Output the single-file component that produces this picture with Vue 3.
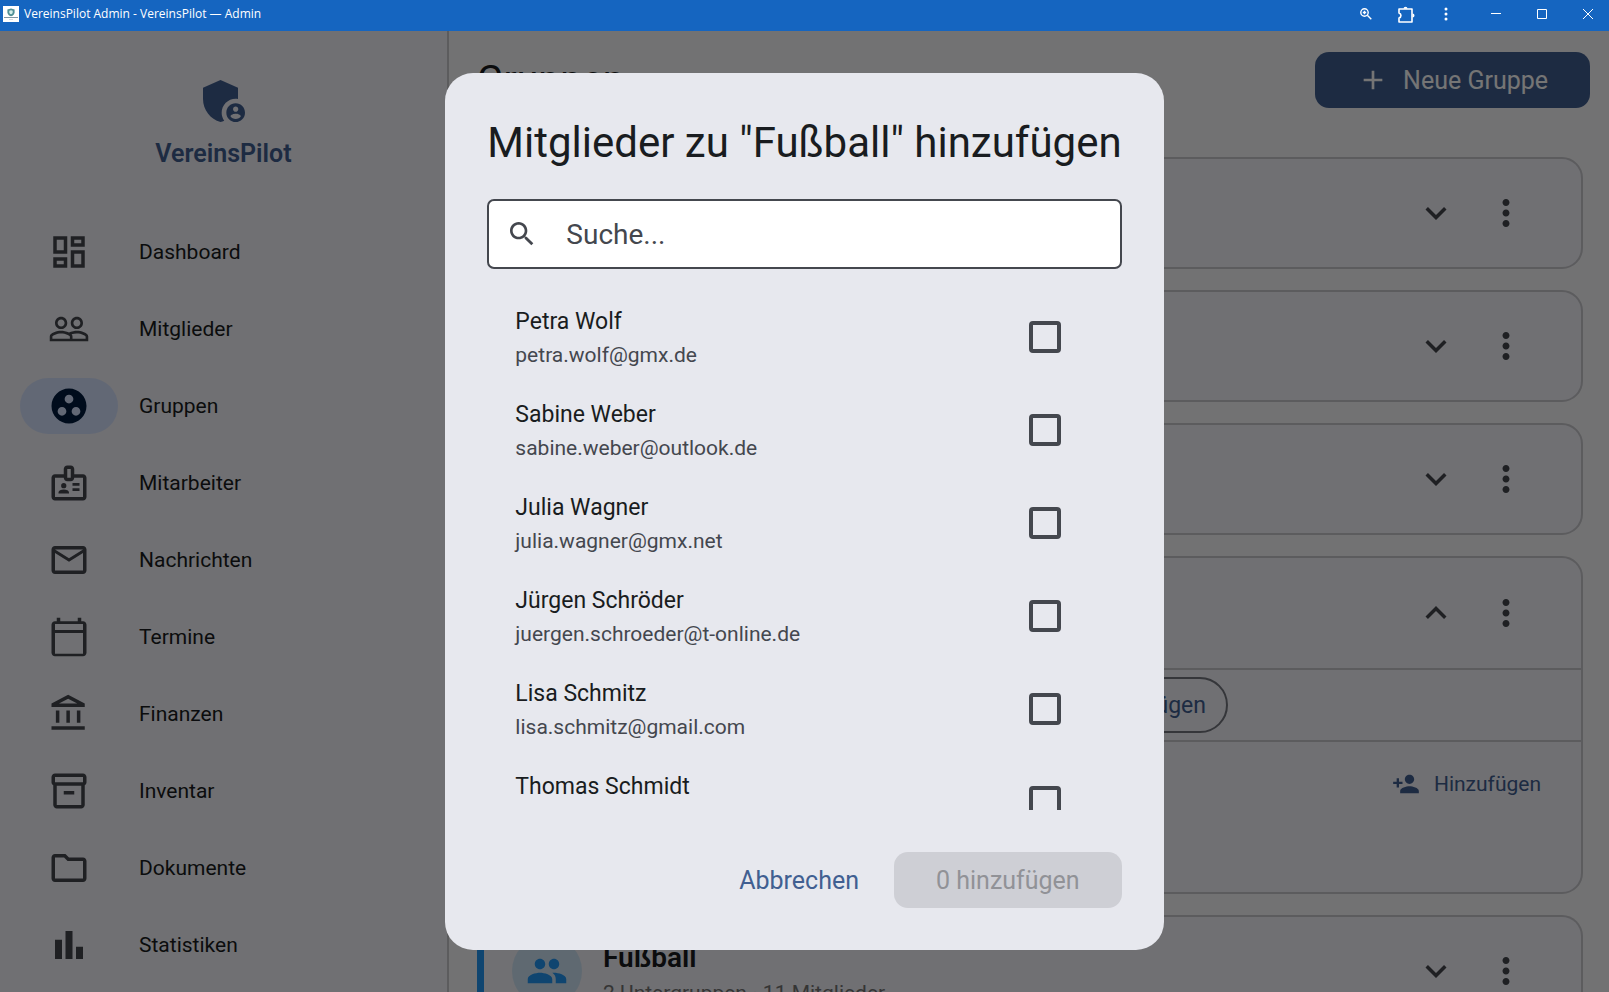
<template>
    <div class="window">
        <header class="titlebar">
            <svg class="favicon" viewBox="0 0 16 16" aria-hidden="true">
                <rect width="16" height="16" fill="#fff" />
                <path d="M8 2.500l3.600 1.100v2.600c0 1.900-1.400 3.300-3.600 4.100-2.200-.8-3.600-2.200-3.600-4.100V3.600z" fill="#4f8f96" />
                <path d="M8 4.200l1.700.6v1.400c0 .9-.6 1.600-1.700 2.100-1.100-.5-1.700-1.200-1.700-2.100V4.800z" fill="#d5eeea" />
                <path d="M1 11.500h14" stroke="#7f96a3" stroke-width="1" />
                <path d="M6 13.500h4" stroke="#d5dbe0" stroke-width="1" />
            </svg>
            <span class="titlebar-text">VereinsPilot Admin - VereinsPilot — Admin</span>
            <div class="titlebar-tools">
                <button class="tool" aria-label="Zoom">
                    <svg width="12" height="12" viewBox="0 0 12 12" fill="none" stroke="#fff">
                        <circle cx="4.500" cy="4.500" r="3.700" stroke-width="1.400" />
                        <path d="M7.300 7.300l4 4M4.500 2.800v3.400M2.800 4.500h3.400" stroke-width="1.400" />
                    </svg>
                </button>
                <button class="tool" aria-label="Erweiterungen">
                    <svg width="17" height="17" viewBox="0 0 17 17" fill="none" stroke="#fff" stroke-width="1.600" stroke-linejoin="round">
                        <path d="M1 3h13v13H1v-4c2.600-.6 2.600-4.300 0-5z" />
                        <path d="M5.500 2.800a2 2 0 0 1 4 0zM14.500 7.500a2 2 0 0 1 0 4z" fill="#fff" stroke="none" />
                    </svg>
                </button>
                <button class="tool" aria-label="Menü">
                    <svg width="4" height="14" viewBox="0 0 4 14" fill="#fff">
                        <circle cx="2" cy="2" r="1.500" /><circle cx="2" cy="7" r="1.500" /><circle cx="2" cy="12" r="1.500" />
                    </svg>
                </button>
            </div>
            <div class="titlebar-window">
                <button class="win" aria-label="Minimieren">
                    <svg width="10" height="10" viewBox="0 0 10 10" stroke="#fff"><path d="M0 4.500h10" /></svg>
                </button>
                <button class="win" aria-label="Maximieren">
                    <svg width="10" height="10" viewBox="0 0 10 10" fill="none" stroke="#fff"><path d="M.5.5h9v9h-9z" /></svg>
                </button>
                <button class="win" aria-label="Schließen">
                    <svg width="10" height="10" viewBox="0 0 10 10" stroke="#fff"><path d="M0 0l10 10M10 0L0 10" /></svg>
                </button>
            </div>
        </header>

        <div class="app">
            <aside class="sidebar">
                <div class="brand">
                    <svg class="brand-logo" viewBox="0 0 24 24" aria-hidden="true"><path :d="icons.admin" /></svg>
                    <span class="brand-name">VereinsPilot</span>
                </div>
                <nav class="nav">
                    <a v-for="n in navItems" :key="n.id" href="#"
                        class="nav-item"
                        :class="{ active: activeNav === n.id }"
                        @click.prevent="activeNav = n.id">
                        <span class="nav-pill">
                            <svg class="icon" viewBox="0 0 24 24" aria-hidden="true"><path :d="icons[n.id]" /></svg>
                        </span>
                        <span class="nav-label">{{ n.label }}</span>
                    </a>
                </nav>
            </aside>

            <main class="main">
                <div class="page-head">
                    <h1 class="page-title">Gruppen</h1>
                    <button class="btn-primary">
                        <svg class="icon-md" viewBox="0 0 24 24" aria-hidden="true"><path :d="icons.add" /></svg>
                        Neue Gruppe
                    </button>
                </div>
                <div class="cards">
                    <section v-for="g in groups" :key="g.id" class="card" :class="{ accent: g.name, open: g.open }">
                        <div class="card-head">
                            <template v-if="g.name">
                                <span class="avatar">
                                    <svg class="icon" viewBox="0 0 24 24" aria-hidden="true"><path :d="icons.people" /></svg>
                                </span>
                                <div class="card-text">
                                    <h2 class="card-title">{{ g.name }}</h2>
                                    <p class="card-sub">{{ g.info }}</p>
                                </div>
                            </template>
                            <div class="card-tools">
                                <button class="icon-btn" :aria-label="g.open ? 'Zuklappen' : 'Aufklappen'" @click="g.open = !g.open">
                                    <svg class="icon" viewBox="0 0 24 24"><path :d="g.open ? icons.less : icons.more" /></svg>
                                </button>
                                <button class="icon-btn" aria-label="Optionen">
                                    <svg class="icon" viewBox="0 0 24 24"><path :d="icons.dots" /></svg>
                                </button>
                            </div>
                        </div>
                        <template v-if="g.open">
                            <div class="card-row">
                                <button class="chip">Untergruppe hinzufügen</button>
                            </div>
                            <div class="card-members">
                                <button class="btn-link">
                                    <svg class="icon-sm" viewBox="0 0 24 24" aria-hidden="true"><path :d="icons.personAdd" /></svg>
                                    Hinzufügen
                                </button>
                            </div>
                        </template>
                    </section>
                </div>
            </main>

            <div class="scrim">
                <div class="dialog" role="dialog" aria-modal="true" aria-labelledby="dialog-title">
                    <h2 id="dialog-title" class="dialog-title">Mitglieder zu "Fußball" hinzufügen</h2>
                    <label class="search">
                        <svg class="icon-md" viewBox="0 0 24 24" aria-hidden="true"><path :d="icons.search" /></svg>
                        <input v-model="query" type="text" class="search-input" placeholder="Suche..." aria-label="Suche" />
                    </label>
                    <div class="list">
                        <label v-for="m in filtered" :key="m.name" class="member">
                            <span class="member-text">
                                <span class="member-name">{{ m.name }}</span>
                                <span class="member-mail">{{ m.mail }}</span>
                            </span>
                            <input v-model="selected" type="checkbox" class="check" :value="m.name" />
                        </label>
                    </div>
                    <div class="actions">
                        <button class="btn-text">Abbrechen</button>
                        <button class="btn-confirm" :disabled="!selected.length">{{ selected.length }} hinzufügen</button>
                    </div>
                </div>
            </div>
        </div>
    </div>
</template>

<script setup>
import { ref, computed } from 'vue';

const activeNav = ref('gruppen');
const query     = ref('');
const selected  = ref([]);

const navItems = [
    { id: 'dashboard',   label: 'Dashboard' },
    { id: 'mitglieder',  label: 'Mitglieder' },
    { id: 'gruppen',     label: 'Gruppen' },
    { id: 'mitarbeiter', label: 'Mitarbeiter' },
    { id: 'nachrichten', label: 'Nachrichten' },
    { id: 'termine',     label: 'Termine' },
    { id: 'finanzen',    label: 'Finanzen' },
    { id: 'inventar',    label: 'Inventar' },
    { id: 'dokumente',   label: 'Dokumente' },
    { id: 'statistiken', label: 'Statistiken' },
];

const groups = ref([
    { id: 1, open: false },
    { id: 2, open: false },
    { id: 3, open: false },
    { id: 4, open: true },
    { id: 5, open: false, name: 'Fußball', info: '2 Untergruppen · 11 Mitglieder' },
]);

const members = [
    { name: 'Petra Wolf',      mail: 'petra.wolf@gmx.de' },
    { name: 'Sabine Weber',    mail: 'sabine.weber@outlook.de' },
    { name: 'Julia Wagner',    mail: 'julia.wagner@gmx.net' },
    { name: 'Jürgen Schröder', mail: 'juergen.schroeder@t-online.de' },
    { name: 'Lisa Schmitz',    mail: 'lisa.schmitz@gmail.com' },
    { name: 'Thomas Schmidt',  mail: '' },
];

const filtered = computed(() => {
    const q = query.value.trim().toLowerCase();
    return members.filter(m => (m.name + ' ' + m.mail).toLowerCase().includes(q));
});

const icons = {
    admin: 'M17 11c.34 0 .67.04 1 .09V6.270L10.500 3 3 6.270v4.910c0 4.540 3.200 8.790 7.500 9.820.55-.13 1.080-.32 1.600-.55C11.410 19.470 11 18.280 11 17c0-3.310 2.690-6 6-6zM17 13c-2.210 0-4 1.790-4 4s1.790 4 4 4 4-1.790 4-4-1.790-4-4-4zm0 1.380c.62 0 1.120.51 1.120 1.120s-.51 1.120-1.120 1.120-1.120-.51-1.120-1.120.5-1.120 1.120-1.120zm0 5.370c-.93 0-1.740-.46-2.240-1.170.05-.72 1.510-1.080 2.240-1.080s2.190.36 2.240 1.080c-.5.71-1.310 1.170-2.240 1.170z',
    dashboard: 'M19 5v2h-4V5h4M9 5v6H5V5h4m10 8v6h-4v-6h4M9 17v2H5v-2h4M21 3h-8v6h8V3zM11 3H3v10h8V3zm10 8h-8v10h8V11zm-10 4H3v6h8v-6z',
    mitglieder: 'M16.5 13c-1.2 0-3.07.34-4.5 1-1.43-.67-3.3-1-4.5-1C5.33 13 1 14.08 1 16.25V19h22v-2.75c0-2.17-4.33-3.25-6.5-3.25zm-4 4.5h-10v-1.25c0-.54 2.56-1.75 5-1.75s5 1.21 5 1.75v1.25zm9 0H14v-1.25c0-.46-.2-.86-.52-1.22.88-.3 1.96-.53 3.02-.53 2.44 0 5 1.21 5 1.75v1.25zM7.5 12c1.93 0 3.5-1.57 3.5-3.5S9.43 5 7.5 5 4 6.57 4 8.5 5.57 12 7.5 12zm0-5.5c1.1 0 2 .9 2 2s-.9 2-2 2-2-.9-2-2 .9-2 2-2zm9 5.5c1.93 0 3.5-1.57 3.5-3.5S18.43 5 16.5 5 13 6.57 13 8.5s1.57 3.5 3.5 3.5zm0-5.5c1.1 0 2 .9 2 2s-.9 2-2 2-2-.9-2-2 .9-2 2-2z',
    gruppen: 'M12 2C6.48 2 2 6.48 2 12s4.48 10 10 10 10-4.48 10-10S17.52 2 12 2zM8 17.5c-1.38 0-2.5-1.12-2.5-2.5s1.12-2.5 2.5-2.5 2.5 1.12 2.5 2.5-1.12 2.5-2.5 2.5zM9.5 8c0-1.38 1.12-2.5 2.5-2.5s2.5 1.12 2.5 2.5-1.12 2.5-2.5 2.5S9.5 9.38 9.5 8zm6.5 9.5c-1.38 0-2.5-1.12-2.5-2.5s1.12-2.5 2.5-2.5 2.5 1.12 2.5 2.5-1.12 2.5-2.5 2.5z',
    mitarbeiter: 'M20 7h-5V4c0-1.1-.9-2-2-2h-2c-1.1 0-2 .9-2 2v3H4c-1.1 0-2 .9-2 2v11c0 1.1.9 2 2 2h16c1.1 0 2-.9 2-2V9c0-1.1-.9-2-2-2zm-9-3h2v5h-2V4zm9 16H4V9h5c0 1.1.9 2 2 2h2c1.1 0 2-.9 2-2h5v11zM9 12a1.5 1.5 0 1 0 0 3 1.5 1.5 0 1 0 0-3zM11.08 16.18C10.44 15.9 9.74 15.75 9 15.75s-1.44.15-2.08.43c-.56.24-.92.78-.92 1.39V18h6v-.43c0-.61-.36-1.15-.92-1.39zM14 15h4v1.5h-4zM14 12h4v1.5h-4z',
    nachrichten: 'M22 6c0-1.1-.9-2-2-2H4c-1.1 0-2 .9-2 2v12c0 1.1.9 2 2 2h16c1.1 0 2-.9 2-2V6zm-2 0l-8 5-8-5h16zm0 12H4V8l8 5 8-5v10z',
    termine: 'M20 3h-1V1h-2v2H7V1H5v2H4c-1.1 0-2 .9-2 2v16c0 1.1.9 2 2 2h16c1.1 0 2-.9 2-2V5c0-1.1-.9-2-2-2zm0 18.500H4V9.700h16v11.800zm0-13.500H4V4.500h16V8z',
    finanzen: 'M6.5 10h-2v7h2v-7zm6 0h-2v7h2v-7zm8.5 9H2v2h19v-2zm-2.5-9h-2v7h2v-7zm-7-6.74L16.71 6H6.29l5.21-2.74m0-2.26L2 6v2h19V6l-9.5-5z',
    inventar: 'M20 2H4c-1 0-2 .9-2 2v3.01c0 .72.43 1.34 1 1.69V20c0 1.1 1.1 2 2 2h14c.9 0 2-.9 2-2V8.7c.57-.35 1-.97 1-1.69V4c0-1.1-1-2-2-2zm-1 18H5V9h14v11zm1-13H4V4h16v3zM9 12h6v2H9z',
    dokumente: 'M9.17 6l2 2H20v10H4V6h5.17M10 4H4c-1.1 0-1.99.9-1.99 2L2 18c0 1.1.9 2 2 2h16c1.1 0 2-.9 2-2V8c0-1.1-.9-2-2-2h-8l-2-2z',
    statistiken: 'M4 9h4v11H4zM16 13h4v7h-4zM10 4h4v16h-4z',
    add: 'M19 13h-6v6h-2v-6H5v-2h6V5h2v6h6v2z',
    more: 'M16.59 8.59L12 13.17 7.41 8.59 6 10l6 6 6-6z',
    less: 'M12 8l-6 6 1.41 1.41L12 10.83l4.59 4.58L18 14z',
    dots: 'M12 8c1.1 0 2-.9 2-2s-.9-2-2-2-2 .9-2 2 .9 2 2 2zm0 2c-1.1 0-2 .9-2 2s.9 2 2 2 2-.9 2-2-.9-2-2-2zm0 6c-1.1 0-2 .9-2 2s.9 2 2 2 2-.9 2-2-.9-2-2-2z',
    search: 'M15.5 14h-.79l-.28-.27C15.41 12.59 16 11.11 16 9.5 16 5.91 13.09 3 9.5 3S3 5.91 3 9.5 5.91 16 9.5 16c1.61 0 3.09-.59 4.23-1.57l.27.28v.79l5 4.99L20.49 19l-4.99-5zm-6 0C7.01 14 5 11.99 5 9.5S7.01 5 9.5 5 14 7.01 14 9.5 11.99 14 9.5 14z',
    personAdd: 'M15 12c2.21 0 4-1.79 4-4s-1.79-4-4-4-4 1.79-4 4 1.79 4 4 4zm-9-2V7H4v3H1v2h3v3h2v-3h3v-2H6zm9 4c-2.67 0-8 1.34-8 4v2h16v-2c0-2.66-5.33-4-8-4z',
    people: 'M16 11c1.66 0 2.99-1.34 2.99-3S17.66 5 16 5c-1.66 0-3 1.34-3 3s1.34 3 3 3zm-8 0c1.66 0 2.99-1.34 2.99-3S9.66 5 8 5C6.34 5 5 6.34 5 8s1.34 3 3 3zm0 2c-2.33 0-7 1.17-7 3.5V19h14v-2.5c0-2.33-4.67-3.5-7-3.5zm8 0c-.29 0-.62.02-.97.05 1.16.84 1.97 1.97 1.97 3.45V19h6v-2.5c0-2.33-4.67-3.5-7-3.5z',
};
</script>

<style>
body {
    margin: 0;
    overflow: hidden;
}
</style>

<style scoped>
.window {
    display: flex;
    flex-direction: column;
    height: 100vh;
    overflow: hidden;
    font-family: Roboto, sans-serif;
    color: #191c20;
}
.window *, .window *::before { box-sizing: border-box; }
button {
    font-family: inherit;
    border: none;
    background: none;
    padding: 0;
    cursor: pointer;
    white-space: nowrap;
}
svg { display: block; flex: none; }
h1, h2, p { margin: 0; }

/* title bar */
.titlebar {
    display: flex;
    align-items: center;
    flex: none;
    height: 31px;
    padding: 0 0 3px 3px;
    background: #1565c0;
    color: #fff;
}
.favicon { width: 16px; height: 16px; }
.titlebar-text {
    flex: 1;
    margin-left: 5px;
    font-family: "Open Sans", sans-serif;
    font-size: 12px;
    line-height: 16px;
}
.titlebar-tools, .titlebar-window { display: flex; }
.titlebar-tools { margin-right: 7px; }
.titlebar-window { margin-right: -2px; }
.tool, .win {
    display: flex;
    align-items: center;
    justify-content: center;
    height: 28px;
}
.tool { width: 40px; }
.win { width: 46px; }

.app {
    position: relative;
    display: flex;
    flex: 1;
    min-height: 0;
}
.icon { width: 42px; height: 42px; fill: currentColor; }
.icon-md { width: 32px; height: 32px; fill: currentColor; }
.icon-sm { width: 28px; height: 28px; fill: currentColor; }

/* sidebar */
.sidebar {
    flex: none;
    width: 449px;
    padding-top: 42px;
    background: #f3f3fa;
    border-right: 2px solid #c8c8ce;
    overflow: hidden;
}
.brand {
    display: flex;
    flex-direction: column;
    align-items: center;
    gap: 7px;
    margin-bottom: 42px;
    color: #415f91;
}
.brand-logo { width: 56px; height: 56px; fill: currentColor; }
.brand-name {
    font-size: 25px;
    font-weight: 600;
    line-height: 35px;
}
.nav-item {
    display: flex;
    align-items: center;
    gap: 21px;
    height: 77px;
    padding-left: 20px;
    color: #191c20;
    text-decoration: none;
}
.nav-pill {
    display: flex;
    align-items: center;
    justify-content: center;
    width: 98px;
    height: 56px;
    border-radius: 28px;
    color: #44474e;
}
.nav-item.active .nav-pill { background: #d6e3ff; color: #001b3e; }
.nav-label { font-size: 21px; line-height: 28px; }

/* page */
.main {
    flex: 1;
    min-width: 0;
    background: #f9f9fa;
    overflow: hidden;
}
.page-head {
    display: flex;
    align-items: center;
    justify-content: space-between;
    padding: 21px 19px 0 28px;
}
.page-title { font-size: 39px; font-weight: 400; line-height: 56px; }
.btn-primary {
    display: flex;
    align-items: center;
    gap: 14px;
    height: 56px;
    padding: 0 42px;
    border-radius: 14px;
    background: #415f91;
    color: #fff;
    font-size: 25px;
}
.cards {
    display: flex;
    flex-direction: column;
    gap: 21px;
    padding: 49px 26px 0 28px;
}
.card {
    flex: none;
    border: 2px solid #c8c8ce;
    border-radius: 21px;
    background: #f3f3fa;
    overflow: hidden;
}
.card.accent { border-left: 7px solid #2196f3; border-radius: 0 21px 21px 0; }
.card-head {
    display: flex;
    align-items: center;
    height: 108px;
    padding: 0 47px 0 28px;
}
.card.open .card-head { height: 110px; }
.avatar {
    display: flex;
    align-items: center;
    justify-content: center;
    width: 70px;
    height: 70px;
    border-radius: 50%;
    background: #d0e5f6;
    color: #2196f3;
}
.card-text { margin-left: 21px; padding-top: 2px; }
.card-title { font-size: 28px; font-weight: 600; line-height: 42px; }
.card-sub { font-size: 21px; line-height: 28px; color: #757575; }
.card-tools { display: flex; gap: 14px; margin-left: auto; }
.icon-btn {
    display: flex;
    justify-content: center;
    width: 56px;
    color: #44474e;
}
.card-row {
    display: flex;
    justify-content: flex-end;
    padding: 7px 353px 7px 28px;
    border-top: 2px solid #c8c8ce;
    border-bottom: 2px solid #c8c8ce;
}
.chip {
    height: 56px;
    padding: 0 20px;
    border: 2px solid #74777f;
    border-radius: 28px;
    color: #415f91;
    font-size: 23px;
}
.card-members {
    display: flex;
    justify-content: flex-end;
    align-items: flex-start;
    height: 150px;
    padding: 14px 40px;
}
.btn-link {
    display: flex;
    align-items: center;
    gap: 14px;
    height: 56px;
    color: #415f91;
    font-size: 21px;
}

/* dialog */
.scrim {
    position: absolute;
    inset: 0;
    display: flex;
    align-items: center;
    justify-content: center;
    padding: 42px;
    background: rgba(0, 0, 0, 0.54);
}
.dialog {
    display: flex;
    flex-direction: column;
    max-height: 100%;
    padding: 42px;
    border-radius: 28px;
    background: #e7e8ee;
}
.dialog-title {
    flex: none;
    font-size: 42px;
    font-weight: 400;
    line-height: 56px;
    white-space: nowrap;
}
.search {
    display: flex;
    align-items: center;
    flex: none;
    gap: 28px;
    height: 70px;
    margin-top: 28px;
    padding: 0 17px;
    border: 2px solid #44474e;
    border-radius: 7px;
    background: #fff;
    color: #44474e;
}
.search-input {
    flex: 1;
    min-width: 0;
    padding: 0;
    border: none;
    outline: none;
    background: none;
    font-family: inherit;
    font-size: 28px;
    color: #191c20;
}
.search-input::placeholder { color: #44474e; opacity: 1; }
.list {
    flex: 1 1 auto;
    min-height: 0;
    height: 558px;
    margin-top: 21px;
    overflow: hidden;
}
.member {
    display: flex;
    align-items: center;
    justify-content: space-between;
    height: 93px;
    padding: 0 61px 0 28px;
}
.member-text { display: flex; flex-direction: column; padding-top: 2px; }
.member-name { font-size: 23px; line-height: 35px; }
.member-mail { min-height: 33px; font-size: 21px; line-height: 33px; color: #44474e; }
.check {
    appearance: none;
    width: 32px;
    height: 32px;
    margin: 0;
    border: 4px solid #44474e;
    border-radius: 4px;
}
.check:checked { background: #415f91; border-color: #415f91; }
.actions {
    display: flex;
    justify-content: flex-end;
    flex: none;
    gap: 14px;
    margin-top: 42px;
}
.btn-text, .btn-confirm {
    height: 56px;
    border-radius: 14px;
    font-size: 25px;
}
.btn-text { padding: 0 21px; color: #415f91; }
.btn-confirm { padding: 0 42px; background: #415f91; color: #fff; }
.btn-confirm:disabled { background: #cecfd5; color: #919297; cursor: default; }
</style>
